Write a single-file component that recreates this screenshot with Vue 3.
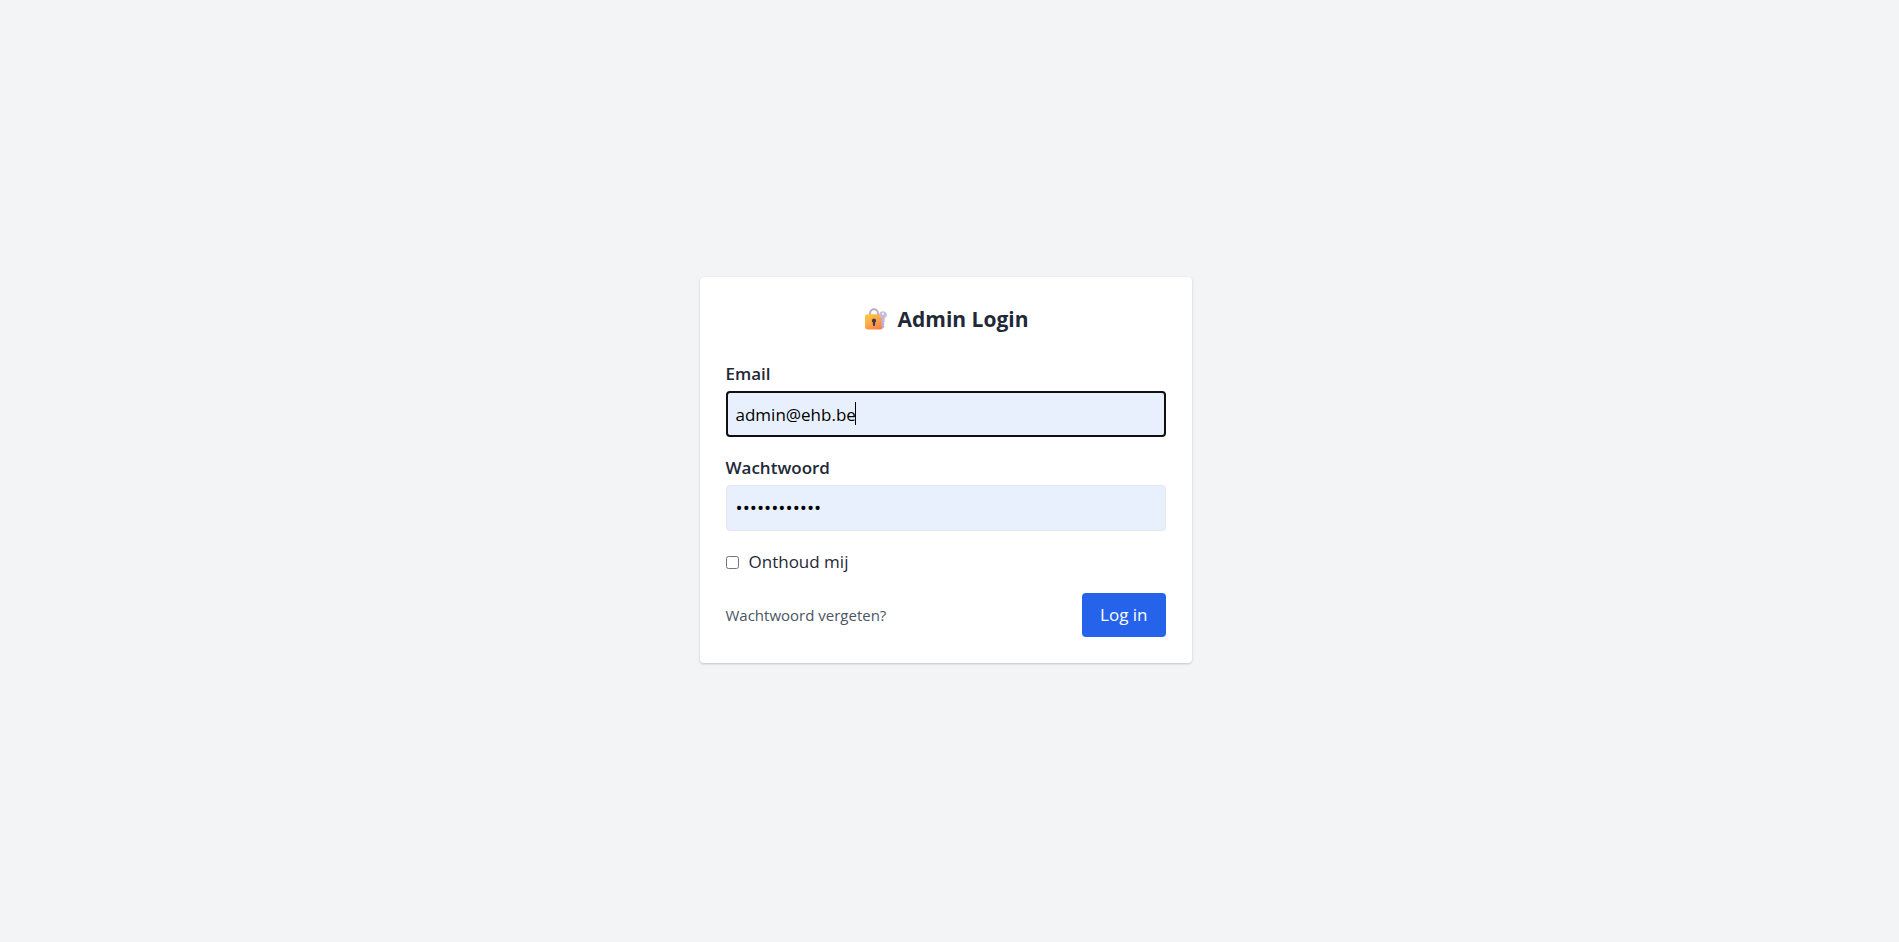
<script setup>
import { ref, onMounted } from 'vue'

const email = ref('admin@ehb.be')
const password = ref('wachtwoord12')
const remember = ref(false)
const emailField = ref(null)

onMounted(() => emailField.value.focus())
</script>

<template>
  <main class="page">
    <form class="card" @submit.prevent>
      <h1 class="title">
        <svg class="lock" viewBox="0 0 28 22" aria-hidden="true">
          <defs>
            <linearGradient id="lock-body" x1="0" y1="0" x2="0.7" y2="1">
              <stop offset="0" stop-color="#ffc943" />
              <stop offset="0.5" stop-color="#fbac45" />
              <stop offset="1" stop-color="#f77f4c" />
            </linearGradient>
            <linearGradient id="lock-key" x1="0" y1="0" x2="0" y2="1">
              <stop offset="0" stop-color="#cbc0db" />
              <stop offset="1" stop-color="#b8abd0" />
            </linearGradient>
          </defs>
          <path d="M8.1 8V5.2a3.9 3.9 0 0 1 7.8 0V8" fill="none" stroke="#b9adc4" stroke-width="2" />
          <rect x="3" y="6.2" width="18" height="15.3" rx="2.4" fill="url(#lock-body)" />
          <path
            d="M20.8 3.2a3.6 3.6 0 0 0-1.5 6.9v8.7l1.6 1.7 1.7-1.6-1-1.4 1-1.3-.9-1.2.9-1.3v-3.6A3.6 3.6 0 0 0 20.8 3.2Zm.1 1.5a1 1 0 1 1 0 2 1 1 0 0 1 0-2Z"
            fill="url(#lock-key)" fill-rule="evenodd"
          />
          <path d="M12 10.5a2.2 2.2 0 0 0-1.1 4.1v2.3a1.1 1.1 0 0 0 2.2 0v-2.3a2.2 2.2 0 0 0-1.1-4.1Z" fill="#43364f" />
        </svg>
        <span>Admin Login</span>
      </h1>

      <div class="field">
        <label for="email">Email</label>
        <div class="control">
          <input id="email" ref="emailField" v-model="email" class="active" type="email" autocomplete="username" />
          <span class="caret" aria-hidden="true"></span>
        </div>
      </div>

      <div class="field">
        <label for="password">Wachtwoord</label>
        <input id="password" v-model="password" class="secret" type="password" autocomplete="current-password" />
      </div>

      <div class="remember">
        <input id="remember" v-model="remember" type="checkbox" />
        <label for="remember">Onthoud mij</label>
      </div>

      <div class="actions">
        <a href="#">Wachtwoord vergeten?</a>
        <button type="submit">Log in</button>
      </div>
    </form>
  </main>
</template>

<style>
body {
  margin: 0;
  background: #f3f4f6;
}
</style>

<style scoped>
.page {
  box-sizing: border-box;
  min-height: 100vh;
  display: flex;
  align-items: center;
  justify-content: center;
  padding: 0 8px 2px 0;
  background: #f3f4f6;
  color: #1f2937;
  font-family: "Segoe UI", "Open Sans", "Noto Sans", sans-serif;
  font-size: 17px;
  line-height: 26px;
}

.card {
  box-sizing: border-box;
  width: 100%;
  max-width: 492px;
  padding: 26px;
  background: #fff;
  border-radius: 4px;
  box-shadow: 0 1px 3px rgba(0, 0, 0, 0.1), 0 1px 2px rgba(0, 0, 0, 0.1);
}

.title {
  display: flex;
  align-items: center;
  justify-content: center;
  gap: 7px;
  margin: 0 0 26px;
  font-size: 21px;
  font-weight: 700;
  line-height: 32px;
}

.lock {
  width: 28px;
  height: 22px;
}

.field {
  margin-bottom: 18px;
}

.field label {
  display: block;
  margin-bottom: 4px;
  font-weight: 600;
}

.field input {
  display: block;
  box-sizing: border-box;
  width: 100%;
  height: 46px;
  padding: 0 9px;
  border: 1px solid #e5e7eb;
  border-radius: 4px;
  outline: none;
  background: #e8f0fe;
  color: #000;
  font: inherit;
}

.field input.active {
  padding: 0 8px;
  border: 2px solid #101010;
  caret-color: transparent;
}

.field input.secret {
  font-size: 19px;
}

.control {
  position: relative;
}

.caret {
  position: absolute;
  top: 11px;
  left: 129px;
  width: 1px;
  height: 23px;
  background: #000;
}

.remember {
  display: flex;
  align-items: center;
  gap: 10px;
  margin-bottom: 18px;
}

.remember input {
  width: 13px;
  height: 13px;
  margin: 0;
}

.actions {
  display: flex;
  align-items: center;
  justify-content: space-between;
}

.actions a {
  color: #4b5563;
  font-size: 15px;
  text-decoration: none;
}

.actions button {
  height: 44px;
  padding: 0 18px;
  border: 0;
  border-radius: 4px;
  background: #2563eb;
  color: #fff;
  font: inherit;
}
</style>
